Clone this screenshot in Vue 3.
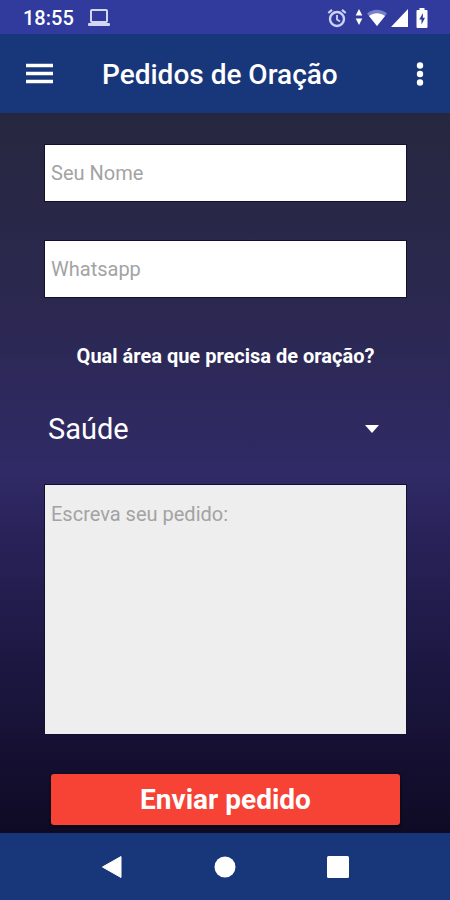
<script setup>
import { ref } from 'vue'

const name = ref('')
const whatsapp = ref('')
const area = ref('Saúde')
const message = ref('')
const areas = ['Saúde']
</script>

<template>
  <div class="app">
    <div class="status">
      <span class="clock">18:55</span>
      <svg class="laptop" width="24" height="20" viewBox="0 0 24 20" aria-hidden="true">
        <rect x="4" y="2" width="16" height="12" rx="1" fill="none" stroke="#d3d6f0" stroke-width="2" />
        <rect x="1" y="15" width="22" height="3" rx="1" fill="#d3d6f0" />
      </svg>
      <div class="indicators">
        <svg width="20" height="20" viewBox="0 0 20 20" aria-hidden="true">
          <circle cx="10" cy="11" r="7" fill="none" stroke="#cdd2f4" stroke-width="2.400" />
          <path d="M10 7v4.500l3 2" fill="none" stroke="#cdd2f4" stroke-width="1.800" />
          <path d="M1.300 5 5 1.800M15 1.800 18.700 5" stroke="#cdd2f4" stroke-width="2.200" />
        </svg>
        <svg class="traffic" width="8" height="18" viewBox="0 0 8 18" aria-hidden="true">
          <path d="M4 0 7.300 6.500H.7zM4 16 .7 9.500h6.600z" fill="#fff" />
        </svg>
        <svg class="wifi" width="20" height="18" viewBox="0 0 20 18" aria-hidden="true">
          <path d="M0 4.500C6-.5 14-.5 20 4.500L10 17z" fill="#7780cb" />
          <path d="M2 7C7 3.400 13 3.400 18 7L10 17z" fill="#fff" />
        </svg>
        <svg class="signal" width="17" height="18" viewBox="0 0 17 18" aria-hidden="true">
          <path d="M17 0v18H0z" fill="#fff" />
        </svg>
        <svg class="battery" width="12" height="20" viewBox="0 0 12 20" aria-hidden="true">
          <path d="M3.500 0h5v2H10.500q1 0 1 1v16q0 1-1 1h-9q-1 0-1-1V3q0-1 1-1h2z" fill="#fff" />
          <path d="M7 5 3.200 11.500H5.500V16.500L9 9.800H6.800z" fill="#303b9d" />
        </svg>
      </div>
    </div>

    <header class="toolbar">
      <button class="icon-button" type="button" aria-label="Menu">
        <svg width="28" height="22" viewBox="0 0 28 22" aria-hidden="true">
          <path d="M0 2.500h27M0 10.500h27M0 18.500h27" stroke="#fff" stroke-width="3.400" />
        </svg>
      </button>
      <h1>Pedidos de Oração</h1>
      <button class="icon-button more" type="button" aria-label="Mais opções">
        <svg width="8" height="24" viewBox="0 0 8 24" aria-hidden="true">
          <g fill="#fff"><circle cx="4" cy="3.500" r="3.200" /><circle cx="4" cy="12" r="3.200" /><circle cx="4" cy="20.500" r="3.200" /></g>
        </svg>
      </button>
    </header>

    <main>
      <form @submit.prevent>
        <input v-model="name" class="field" type="text" placeholder="Seu Nome" aria-label="Seu Nome" />
        <input v-model="whatsapp" class="field" type="tel" placeholder="Whatsapp" aria-label="Whatsapp" />
        <label class="question" for="area">Qual área que precisa de oração?</label>
        <div class="picker">
          <select id="area" v-model="area">
            <option v-for="item in areas" :key="item">{{ item }}</option>
          </select>
          <svg class="caret" width="14" height="8" viewBox="0 0 14 8" aria-hidden="true">
            <path d="M0 0h14L7 8z" fill="#fff" />
          </svg>
        </div>
        <textarea v-model="message" class="field message" placeholder="Escreva seu pedido:" aria-label="Escreva seu pedido"></textarea>
        <button class="submit" type="submit">Enviar pedido</button>
      </form>
    </main>

    <nav class="system">
      <button type="button" aria-label="Voltar">
        <svg width="24" height="24" viewBox="0 0 24 24" aria-hidden="true">
          <path d="M2.500 12 21 1.500v21z" fill="#fff" stroke="#fff" stroke-linejoin="round" />
        </svg>
      </button>
      <button type="button" aria-label="Início">
        <svg width="24" height="24" viewBox="0 0 24 24" aria-hidden="true">
          <circle cx="12" cy="12" r="10.500" fill="#fff" />
        </svg>
      </button>
      <button type="button" aria-label="Recentes">
        <svg width="24" height="24" viewBox="0 0 24 24" aria-hidden="true">
          <rect x="1" y="1" width="22" height="22" rx="1.500" fill="#fff" />
        </svg>
      </button>
    </nav>
  </div>
</template>

<style>
body {
  margin: 0;
  background: #18367a;
}
</style>

<style scoped>
.app {
  display: flex;
  flex-direction: column;
  min-height: 100vh;
  color: #fff;
  font-family: Roboto, "Liberation Sans", sans-serif;
}

button,
input,
select,
textarea {
  box-sizing: border-box;
  margin: 0;
  border: 0;
  border-radius: 0;
  font-family: inherit;
}

button {
  padding: 0;
  background: none;
  color: inherit;
  cursor: pointer;
}

svg {
  display: block;
  flex: none;
}

.status {
  display: flex;
  align-items: center;
  height: 32px;
  padding: 2px 22px 0 23px;
  background: #303b9d;
}

.clock {
  font-size: 20px;
  font-weight: 500;
  line-height: 24px;
}

.laptop {
  margin-left: 13px;
}

.indicators {
  display: flex;
  align-items: center;
  margin-left: auto;
}

.traffic {
  margin-left: 8px;
}

.wifi {
  margin-left: 4px;
}

.signal {
  margin-left: 4px;
}

.battery {
  margin-left: 8px;
}

.toolbar {
  display: flex;
  align-items: center;
  height: 79px;
  padding: 0 26px;
  background: #18367a;
}

.icon-button {
  display: flex;
  align-items: center;
  height: 48px;
}

.more {
  margin-left: auto;
}

h1 {
  margin: 0 0 0 48px;
  padding-top: 2px;
  font-size: 28px;
  font-weight: 500;
  line-height: 36px;
  white-space: nowrap;
}

main {
  flex: 1;
  padding: 32px 44px 8px 45px;
  background: linear-gradient(#26273f, #2b284f 25%, #302a66 50%, #292259 59%, #1c1741 77%, #0f0a24);
}

form {
  display: flex;
  flex-direction: column;
}

.field {
  width: 100%;
  height: 56px;
  margin-bottom: 40px;
  padding: 0 6px;
  background: #fff;
  color: #333;
  font-size: 20px;
  line-height: 24px;
  outline: 1px solid #12102e;
}

.field::placeholder {
  color: #a3a3a3;
  opacity: 1;
}

.question {
  margin-top: 7px;
  font-size: 20px;
  font-weight: 700;
  line-height: 24px;
  text-align: center;
}

.picker {
  display: grid;
  align-items: center;
  margin: 34px 0 30px;
}

.picker > * {
  grid-area: 1 / 1;
}

select {
  width: 100%;
  height: 53px;
  padding: 0 48px 0 3px;
  background: transparent;
  color: #fff;
  font-size: 29px;
  appearance: none;
}

option {
  color: #222;
}

.caret {
  justify-self: end;
  margin-right: 27px;
  pointer-events: none;
}

.message {
  display: block;
  height: 249px;
  padding: 17px 6px;
  background: #eee;
  resize: none;
}

.submit {
  height: 51px;
  margin: 0 6px;
  border-radius: 3px;
  background: #f64336;
  box-shadow: 0 1px 3px #000;
  font-size: 28px;
  font-weight: 700;
}

.system {
  display: flex;
  justify-content: center;
  gap: 89px;
  padding: 22px 0;
  background: #18367a;
}
</style>
